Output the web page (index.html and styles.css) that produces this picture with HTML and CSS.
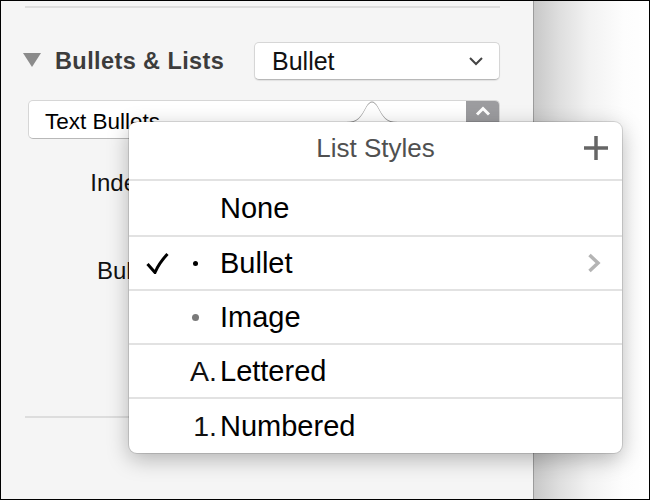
FILE: index.html
```html
<!DOCTYPE html>
<html>
<head>
<meta charset="utf-8">
<link rel="stylesheet" href="styles.css">
</head>
<body>
<div class="frame">
  <aside class="sidebar">
    <div class="rule rule-top"></div>
    <div class="section-head">
      <span class="disclosure"></span>
      <span class="section-title">Bullets &amp; Lists</span>
      <div class="popup">
        <span class="popup-text">Bullet</span>
        <svg class="popup-chev" width="16" height="10" viewBox="0 0 16 10"><path d="M2 2 L8 8 L14 2" fill="none" stroke="#444" stroke-width="2"/></svg>
      </div>
    </div>
    <div class="combo">
      <span class="combo-text">Text Bullets</span>
      <div class="combo-step">
        <svg width="16" height="10" viewBox="0 0 16 10"><path d="M2 8.5 L8 2.5 L14 8.5" fill="none" stroke="#fff" stroke-width="3"/></svg>
      </div>
    </div>
    <div class="field-row row-indent"><span class="field-label">Indent</span></div>
    <div class="field-row row-bullet"><span class="field-label">Bullet</span></div>
    <div class="rule rule-bottom"></div>
  </aside>
  <div class="canvas"></div>

  <svg class="pop-arrow" width="52" height="27" viewBox="0 0 52 27"><path d="M0 27 C12 27 15 21 20 12 Q26 1 32 12 C37 21 40 27 52 27 Z" fill="#fff"/></svg>
  <div class="popover">
    <div class="pop-head">
      <span class="pop-title">List Styles</span>
      <svg class="pop-plus" width="24" height="24" viewBox="0 0 24 24"><path d="M12 0 V24 M0 12 H24" stroke="#666" stroke-width="3.5"/></svg>
    </div>
    <div class="style-row row-first">
      <span class="check"></span><span class="marker"></span><span class="label">None</span>
    </div>
    <div class="style-row">
      <span class="check"><svg width="24" height="22" viewBox="0 0 24 22"><path d="M2.5 12 L10 20.5 Q14 11 22.5 2" fill="none" stroke="#000" stroke-width="3"/></svg></span>
      <span class="marker"><span class="dot"></span></span><span class="label">Bullet</span>
      <svg class="row-chev" width="14" height="20" viewBox="0 0 14 20"><path d="M2.5 2 L11 10 L2.5 18" fill="none" stroke="#b4b4b4" stroke-width="3.5"/></svg>
    </div>
    <div class="style-row">
      <span class="check"></span><span class="marker"><span class="dot dot-gray"></span></span><span class="label">Image</span>
    </div>
    <div class="style-row">
      <span class="check"></span><span class="marker">A.</span><span class="label">Lettered</span>
    </div>
    <div class="style-row row-last">
      <span class="check"></span><span class="marker">1.</span><span class="label">Numbered</span>
    </div>
  </div>
</div>
</body>
</html>
```
FILE: styles.css
```css
html, body {
  margin: 0;
  padding: 0;
  background: #fff;
}

.frame {
  width: 650px;
  height: 500px;
  box-sizing: border-box;
  border: 1px solid #000;
  display: flex;
  position: relative;
  overflow: hidden;
  font-family: "Liberation Sans", Arial, sans-serif;
}

.sidebar {
  width: 533px;
  flex: none;
  box-sizing: border-box;
  background: #f5f5f5;
  border-right: 1px solid #9c9c9c;
  padding: 5px 33px 0 22px;
  display: flex;
  flex-direction: column;
}

.canvas {
  flex: 1;
  background: linear-gradient(to right, #c8c8c8 0px, #dedede 25px, #f2f2f2 55px, #fdfdfd 90px, #fff 115px);
}

.rule {
  height: 2px;
  background: #dddddd;
  margin-left: 2px;
}

.section-head {
  display: flex;
  align-items: center;
  height: 39px;
  margin-top: 33px;
}

.disclosure {
  width: 0;
  height: 0;
  border-left: 9px solid transparent;
  border-right: 9px solid transparent;
  border-top: 14px solid #8b8b8b;
  margin-top: -1px;
}

.section-title {
  margin-left: 14px;
  font-size: 23.5px;
  font-weight: bold;
  color: #3c3c3c;
  letter-spacing: 0.4px;
  margin-top: 1px;
}

.popup {
  margin-left: auto;
  width: 246px;
  height: 38px;
  box-sizing: border-box;
  background: #fff;
  border-radius: 5px;
  border: 1px solid #d6d6d6;
  border-bottom-color: #b8b8b8;
  box-shadow: 0 1px 1px rgba(0, 0, 0, 0.08);
  display: flex;
  align-items: center;
  padding: 0 15px 0 17px;
}

.popup-text {
  font-size: 25px;
  color: #111;
  margin-top: 1px;
}

.popup-chev {
  margin-left: auto;
}

.combo {
  margin-top: 20px;
  margin-left: 5px;
  height: 39px;
  box-sizing: border-box;
  background: #fff;
  border: 1px solid #d6d6d6;
  border-bottom-color: #b8b8b8;
  border-radius: 5px;
  display: flex;
  align-items: flex-start;
  overflow: hidden;
}

.combo-text {
  font-size: 22.5px;
  color: #000;
  padding: 8px 0 0 16px;
}

.combo-step {
  margin-left: auto;
  width: 33px;
  height: 100%;
  background: #9c9c9f;
  display: flex;
  justify-content: center;
  padding-top: 5px;
  box-sizing: border-box;
}

.field-row {
  width: 134px;
  text-align: right;
}

.row-indent {
  margin-top: 30px;
}

.row-bullet {
  margin-top: 60px;
}

.field-label {
  font-size: 24px;
  color: #111;
}

.rule-bottom {
  margin-top: 131px;
}

/* popover */
.pop-arrow {
  position: absolute;
  left: 345px;
  top: 95px;
  filter: drop-shadow(0 -0.5px 0.6px rgba(0, 0, 0, 0.4));
  z-index: 1;
}

.popover {
  position: absolute;
  left: 128px;
  top: 121px;
  width: 493px;
  height: 331px;
  box-sizing: border-box;
  background: #fff;
  border-radius: 8px;
  box-shadow: 0 0 0 1px rgba(0, 0, 0, 0.12), 0 6px 22px rgba(0, 0, 0, 0.28);
  display: flex;
  flex-direction: column;
  overflow: hidden;
  z-index: 2;
}

.pop-head {
  height: 57px;
  flex: none;
  position: relative;
  display: flex;
  align-items: center;
  justify-content: center;
}

.pop-title {
  font-size: 26px;
  color: #505050;
  margin-top: -5px;
}

.pop-plus {
  position: absolute;
  right: 14px;
  top: 14px;
}

.style-row {
  height: 54px;
  flex: none;
  box-sizing: border-box;
  border-top: 2px solid #e2e2e2;
  display: flex;
  align-items: center;
  padding: 0 21px 0 18px;
}

.row-first {
  height: 56px;
}

.row-last {
  height: 56px;
}

.check {
  width: 24px;
  height: 22px;
  display: flex;
  margin-left: -2px;
  margin-right: 2px;
}

.marker {
  width: 46px;
  text-align: right;
  font-size: 28.5px;
  color: #111;
  display: flex;
  justify-content: flex-end;
  align-items: center;
}

.dot {
  width: 5px;
  height: 5px;
  border-radius: 50%;
  background: #000;
  margin-right: 19px;
}

.dot-gray {
  width: 7px;
  height: 7px;
  background: #7a7a7a;
  margin-right: 18px;
}

.label {
  margin-left: 3px;
  font-size: 29px;
  color: #000;
}

.row-chev {
  margin-left: auto;
}
```
